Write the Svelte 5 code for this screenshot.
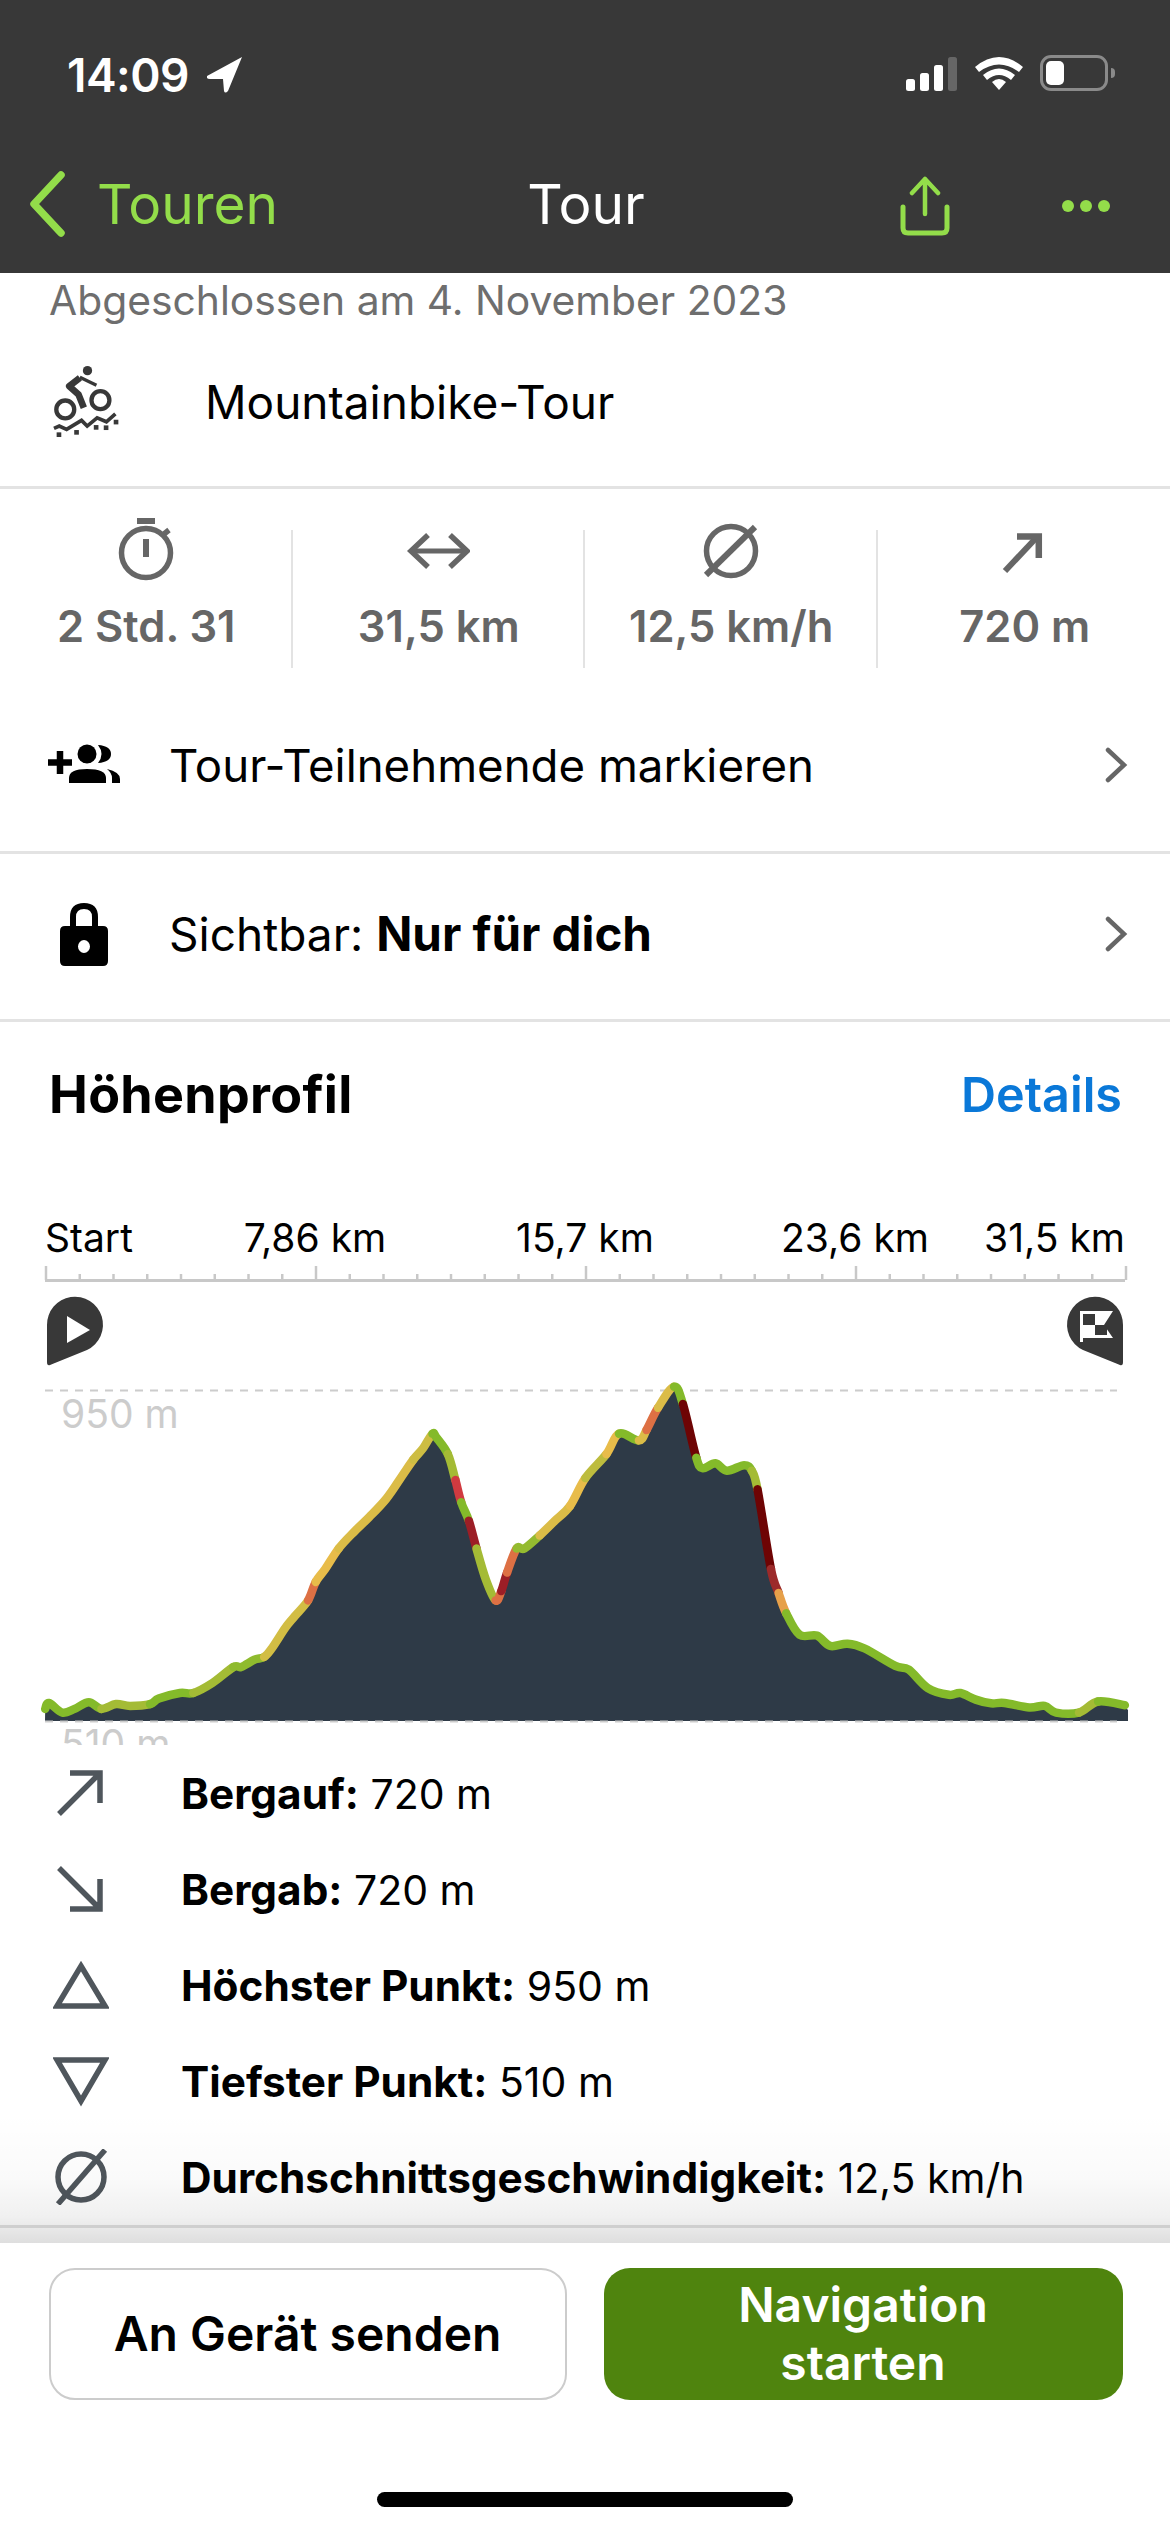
<script>
  // elevation line, one run per gradient colour; x/y are screen px inside the chart svg
  const Z3 = ([x, y]) => [x / 2.613, 1180 + y / 2.7];
  const Z4 = ([x, y]) => [570 + x / 2.613, 1180 + y / 2.7];

  const left = [
    [118,1428],[128,1412],[163,1438],[195,1428],[232,1410],[265,1428],[303,1415],[340,1420],[392,1415],[415,1400],
    [470,1385],[505,1385],[555,1358],[610,1315],[630,1315],[665,1295],[690,1288],[710,1265],[745,1210],[770,1178],
    [805,1135],[825,1085],[850,1050],[885,995],[925,950],[965,910],[1010,860],[1050,800],[1080,755],[1105,725],
    [1130,685],[1140,695],[1170,740],[1190,810],[1205,870],[1225,920],[1245,995],[1270,1080],[1295,1135],[1310,1110],
    [1325,1060],[1350,995],[1370,995],[1410,960],[1450,920]
  ].map(Z3);
  const right = [
    [0,880],[40,805],[95,740],[128,685],[180,703],[200,675],[230,615],[272,558],[295,605],[330,750],
    [347,778],[380,765],[410,785],[455,770],[475,785],[490,835],[525,1050],[545,1115],[565,1170],[600,1228],
    [645,1230],[680,1258],[725,1252],[770,1265],[850,1312],[885,1322],[935,1372],[990,1390],[1020,1385],[1060,1403],
    [1100,1413],[1135,1412],[1200,1424],[1240,1420],[1270,1438],[1330,1438],[1380,1408],[1450,1418]
  ].map(Z4);
  const pts = [...left, ...right];

  const GREEN = "#84ba2a", OLIVE = "#a4bb35", SAND = "#dbbc47", AMBER = "#e8bc4a";
  const ORANGE = "#dd7044", RED = "#d13a40", DARK = "#9c1e26", MAROON = "#6e0404";

  // [first index, last index, colour]
  const runs = [
    [0, 5, GREEN], [5, 8, OLIVE], [8, 11, GREEN], [11, 13, OLIVE], [13, 16, "#8fbb2e"], [16, 20, "#d2bd44"],
    [20, 21, ORANGE], [21, 23, AMBER], [23, 28, SAND], [28, 30, "#cdbd43"], [30, 32, GREEN], [32, 33, OLIVE],
    [33, 34, RED], [34, 35, GREEN], [35, 36, DARK], [36, 38, OLIVE], [38, 39, ORANGE], [39, 40, DARK],
    [40, 41, ORANGE], [41, 43, "#94bb30"], [43, 45, SAND], [45, 46, AMBER], [46, 47, "#bdbc3e"], [47, 48, AMBER],
    [48, 49, GREEN], [49, 50, SAND], [50, 51, ORANGE], [51, 52, SAND], [52, 53, GREEN], [53, 54, MAROON],
    [54, 59, GREEN], [59, 60, OLIVE], [60, 61, MAROON], [61, 62, "#9c2a2a"], [62, 63, "#e6a04a"],
    [63, 80, GREEN], [80, 81, OLIVE], [81, 82, GREEN]
  ];

  // catmull-rom through pts[a..b], using the neighbours outside the run too
  function smooth(a, b) {
    let d = `M${pts[a][0].toFixed(1)} ${pts[a][1].toFixed(1)}`;
    for (let i = a; i < b; i++) {
      const p0 = pts[Math.max(i - 1, 0)];
      const p1 = pts[i];
      const p2 = pts[i + 1];
      const p3 = pts[Math.min(i + 2, pts.length - 1)];
      const c1x = p1[0] + (p2[0] - p0[0]) / 6;
      const c1y = p1[1] + (p2[1] - p0[1]) / 6;
      const c2x = p2[0] - (p3[0] - p1[0]) / 6;
      const c2y = p2[1] - (p3[1] - p1[1]) / 6;
      d += ` C${c1x.toFixed(1)} ${c1y.toFixed(1)} ${c2x.toFixed(1)} ${c2y.toFixed(1)} ${p2[0].toFixed(1)} ${p2[1].toFixed(1)}`;
    }
    return d;
  }

  const segments = runs.map(([a, b, c]) => ({ d: smooth(a, b), c }));
  const BASE = 1721;
  const area = smooth(0, pts.length - 1) + ` L1128 ${pts[pts.length - 1][1] + 5} L1128 ${BASE} L45 ${BASE} Z`;

  const axisLabels = [
    { t: "7,86 km", x: 315 }, { t: "15,7 km", x: 585 }, { t: "23,6 km", x: 855 }
  ];
  const ticks = Array.from({ length: 33 }, (_, i) => 46 + i * 33.75);

  const summary = [
    { icon: "up", label: "Bergauf:", value: "720 m" },
    { icon: "down", label: "Bergab:", value: "720 m" },
    { icon: "high", label: "Höchster Punkt:", value: "950 m" },
    { icon: "low", label: "Tiefster Punkt:", value: "510 m" },
    { icon: "avg", label: "Durchschnittsgeschwindigkeit:", value: "12,5 km/h" }
  ];
</script>

<div class="phone">
  <header>
    <div class="status">
      <div class="time">
        <span>14:09</span>
        <svg width="36" height="36" viewBox="0 0 36 36"><path d="M35 0 L0 19 Q-1 22 3 22 L16 22 L17 34 Q18 37 21 34 Z" fill="#fff" /></svg>
      </div>
      <div class="indicators">
        <svg class="signal" width="52" height="36" viewBox="0 0 52 36">
          <rect x="0" y="22" width="9" height="12" rx="2.5" fill="#fff" />
          <rect x="14" y="16" width="9" height="18" rx="2.5" fill="#fff" />
          <rect x="28" y="8" width="9" height="26" rx="2.5" fill="#fff" />
          <rect x="42" y="0" width="9" height="34" rx="2.5" fill="#666" />
        </svg>
        <svg class="wifi" width="48" height="36" viewBox="0 0 48 36">
          <path d="M0 12 Q24 -8 48 12 L44 17 Q24 2 4 17 Z" fill="#fff" />
          <path d="M8 20 Q24 7 40 20 L36 25 Q24 15 12 25 Z" fill="#fff" />
          <path d="M17 27 Q24 21 31 27 L24 35 Z" fill="#fff" />
        </svg>
        <div class="battery"><div class="charge"></div></div>
        <div class="tip"></div>
      </div>
    </div>
    <nav>
      <div class="back">
        <svg width="40" height="66" viewBox="0 0 40 66"><path d="M33 4 L6 33 L33 62" fill="none" stroke="#93dd4a" stroke-width="7.5" stroke-linecap="round" stroke-linejoin="round" /></svg>
        <span>Touren</span>
      </div>
      <div class="title">Tour</div>
      <div class="actions">
        <svg width="50" height="60" viewBox="0 0 50 60" fill="none" stroke="#93dd4a" stroke-width="4.5" stroke-linecap="round" stroke-linejoin="round">
          <path d="M25 38 V3 M12 17 L25 3 L38 17" />
          <path d="M3 31 V52 Q3 57 8 57 H42 Q47 57 47 52 V31" stroke-width="5" />
        </svg>
        <svg width="48" height="14" viewBox="0 0 48 14"><circle cx="6" cy="7" r="6" fill="#93dd4a" /><circle cx="24" cy="7" r="6" fill="#93dd4a" /><circle cx="42" cy="7" r="6" fill="#93dd4a" /></svg>
      </div>
    </nav>
  </header>

  <main>
    <div class="finished">Abgeschlossen am 4. November 2023</div>
    <div class="type">
      <svg class="bike" width="73" height="78" viewBox="150 95 220 235">
        <circle cx="263" cy="118" r="14" fill="#383838" />
        <path d="M240 140 L208 165 L236 190 L252 230" fill="none" stroke="#383838" stroke-width="20" stroke-linejoin="round" />
        <path d="M240 138 L290 162" fill="none" stroke="#383838" stroke-width="10" />
        <circle cx="196" cy="235" r="27" fill="none" stroke="#383838" stroke-width="13" />
        <circle cx="302" cy="207" r="27" fill="none" stroke="#383838" stroke-width="13" />
        <path d="M162 292 L178 285 L200 295 L245 268 L262 285 L292 260 L320 272 L347 248" fill="none" stroke="#383838" stroke-width="11" />
        <rect x="170" y="304" width="14" height="14" fill="#383838" />
        <rect x="223" y="297" width="14" height="14" fill="#383838" />
        <rect x="282" y="282" width="14" height="14" fill="#383838" />
        <rect x="312" y="283" width="14" height="14" fill="#383838" />
        <rect x="342" y="266" width="14" height="14" fill="#383838" />
      </svg>
      <span>Mountainbike-Tour</span>
    </div>

    <div class="stats">
      <div class="stat">
        <svg width="64" height="64" viewBox="113 518 64 64" fill="none" stroke="#666" stroke-width="5.5">
          <circle cx="146" cy="553" r="24.5" />
          <rect x="137" y="518" width="18" height="6" fill="#666" stroke="none" />
          <rect x="143" y="539" width="6" height="18" fill="#666" stroke="none" />
          <path d="M164 534 L169 530" />
        </svg>
        <span>2 Std. 31</span>
      </div>
      <div class="stat">
        <svg width="64" height="64" viewBox="406 518 64 64" fill="none" stroke="#666" stroke-width="5.5">
          <path d="M414 551 H464" stroke-width="5" />
          <path d="M428 535 L411 551 L428 567 M450 535 L467 551 L450 567" />
        </svg>
        <span>31,5 km</span>
      </div>
      <div class="stat">
        <svg width="64" height="64" viewBox="698 518 64 64" fill="none" stroke="#666" stroke-width="5.5">
          <circle cx="731" cy="551" r="24.5" />
          <path d="M755 527 L706 575" stroke-width="6" />
        </svg>
        <span>12,5 km/h</span>
      </div>
      <div class="stat">
        <svg width="64" height="64" viewBox="992 518 64 64" fill="none" stroke="#666" stroke-width="6.5">
          <path d="M1037 537 L1005 571" stroke-width="6" />
          <path d="M1017 536.5 H1038.8 V558" />
        </svg>
        <span>720 m</span>
      </div>
    </div>

    <div class="row">
      <svg class="row-icon" width="74" height="42" viewBox="47 745 74 42">
        <path d="M48 763.5 H72 M60 752 V775" stroke="#000" stroke-width="6.5" />
        <circle cx="87" cy="755" r="9.5" fill="#000" />
        <path d="M69 784 V779 Q69 770 87 770 Q106 770 106 779 V784 Z" fill="#000" />
        <path d="M98 746 Q105 755 98 764 Q111 763 111 755 Q111 747 98 746 Z" fill="#000" />
        <path d="M107 770 Q120 773 120 780 V784 H112 V779 Q112 774 107 770 Z" fill="#000" />
      </svg>
      <span class="row-text">Tour-Teilnehmende markieren</span>
      <svg class="chevron" width="24" height="36" viewBox="0 0 24 36"><path d="M4 3 L20 18 L4 33" fill="none" stroke="#666" stroke-width="4.5" stroke-linecap="round" /></svg>
    </div>
    <div class="row second">
      <svg class="row-icon lock" width="48" height="64" viewBox="0 0 48 64">
        <path d="M13 28 V15 Q13 4 24 4 Q35 4 35 15 V28" fill="none" stroke="#000" stroke-width="6" />
        <path d="M5 24 H43 Q48 24 48 29 V59 Q48 64 43 64 H5 Q0 64 0 59 V29 Q0 24 5 24 Z M24 38 A6 6.5 0 1 0 24 51 A6 6.5 0 1 0 24 38 Z" fill="#000" fill-rule="evenodd" />
      </svg>
      <span class="row-text">Sichtbar: <b>Nur für dich</b></span>
      <svg class="chevron" width="24" height="36" viewBox="0 0 24 36"><path d="M4 3 L20 18 L4 33" fill="none" stroke="#666" stroke-width="4.5" stroke-linecap="round" /></svg>
    </div>

    <section>
      <div class="section-head">
        <h2>Höhenprofil</h2>
        <span class="details">Details</span>
      </div>
      <svg class="chart" width="1170" height="542" viewBox="0 1203 1170 542">
        <text x="45" y="1252" class="axis">Start</text>
        {#each axisLabels as l}
          <text x={l.x} y="1252" text-anchor="middle" class="axis">{l.t}</text>
        {/each}
        <text x="1125" y="1252" text-anchor="end" class="axis">31,5 km</text>
        <path d="M45 1280.5 H1125" stroke="#c8c8c8" stroke-width="3" />
        {#each ticks as x, i}
          <path d="M{x} 1280 V{i % 8 === 0 ? 1266 : 1274}" stroke="#c8c8c8" stroke-width="2.5" />
        {/each}

        <path d="M47 1325 A28 28 0 1 1 87 1350 L50 1365 Q47 1366 47 1362 Z" fill="#383838" />
        <path d="M67 1316 L90 1330 L67 1343 Z" fill="#fff" />
        <path d="M1123 1325 A28 28 0 1 0 1083 1350 L1120 1365 Q1123 1366 1123 1362 Z" fill="#383838" />
        <path d="M1080 1342 V1311 H1113 L1104 1325 L1113 1338 H1083 V1342 Z" fill="#fff" />
        <rect x="1083" y="1314" width="12" height="11" fill="#383838" />
        <rect x="1095" y="1325" width="12" height="10" fill="#383838" />

        <path d="M45 1390.5 H1117" stroke="#ccc" stroke-width="2" stroke-dasharray="8 7" />
        <text x="61" y="1428" class="limit">950 m</text>
        <text x="61" y="1758" class="limit">510 m</text>

        <path d={area} fill="#2e3a47" />
        {#each segments as s}
          <path d={s.d} fill="none" stroke={s.c} stroke-width="8.5" stroke-linecap="round" stroke-linejoin="round" />
        {/each}
        <path d="M45 1721.5 H1117" stroke="#ccc" stroke-width="2" stroke-dasharray="8 7" />
      </svg>

      <ul>
        {#each summary as item}
          <li>
            <svg width="56" height="56" viewBox="0 0 56 56" fill="none" stroke="#4f565c" stroke-width="5.5">
              {#if item.icon === "up"}
                <path d="M6 49 L45 10 M17 8 H47 V38" />
              {:else if item.icon === "down"}
                <path d="M6 7 L45 46 M47 18 V48 H17" />
              {:else if item.icon === "high"}
                <path d="M28 9 L52 49 H4 Z" />
              {:else if item.icon === "low"}
                <path d="M4 7 H52 L28 48 Z" />
              {:else}
                <circle cx="28" cy="28" r="23" />
                <path d="M52 1 L5 55" />
              {/if}
            </svg>
            <span><b>{item.label}</b> {item.value}</span>
          </li>
        {/each}
      </ul>
    </section>
    <div class="fade"></div>
  </main>

  <footer>
    <div class="buttons">
      <button class="outline">An Gerät senden</button>
      <button class="primary">Navigation starten</button>
    </div>
    <div class="home"></div>
  </footer>
</div>

<style>
  :global(body) {
    margin: 0;
    background: #fff;
  }

  .phone {
    width: 1170px;
    height: 2532px;
    display: flex;
    flex-direction: column;
    overflow: hidden;
    font-family: Inter, "Liberation Sans", sans-serif;
    color: #000;
  }

  header {
    height: 273px;
    flex: none;
    background: #383838;
    color: #fff;
  }

  .status {
    height: 150px;
    padding: 55px 55px 0 67px;
    box-sizing: border-box;
    display: flex;
    justify-content: space-between;
  }

  .time {
    display: flex;
    align-items: flex-start;
    gap: 18px;
    font-size: 46px;
    font-weight: 600;
    letter-spacing: -0.5px;
    line-height: 40px;
  }

  .time svg {
    margin-top: 2px;
  }

  .indicators {
    display: flex;
    align-items: flex-start;
    height: 38px;
  }

  .signal {
    margin: 2px 17px 0 0;
  }

  .wifi {
    margin-right: 17px;
  }

  .battery {
    width: 68px;
    height: 36px;
    box-sizing: border-box;
    border: 3px solid #8a8a8a;
    border-radius: 11px;
    padding: 3px;
  }

  .charge {
    width: 18px;
    height: 24px;
    background: #fff;
    border-radius: 5px;
  }

  .tip {
    width: 4px;
    height: 10px;
    margin: 13px 0 0 3px;
    background: #8a8a8a;
    border-radius: 0 4px 4px 0;
  }

  nav {
    height: 123px;
    position: relative;
    display: flex;
    align-items: flex-start;
    justify-content: space-between;
    padding: 21px 60px 0 28px;
  }

  .back {
    display: flex;
    align-items: center;
    gap: 29px;
    color: #93dd4a;
    font-size: 55px;
  }

  .title {
    position: absolute;
    left: 2px;
    right: 0;
    top: 22px;
    text-align: center;
    font-size: 55px;
    line-height: 64px;
  }

  .actions {
    display: flex;
    align-items: center;
    gap: 112px;
    margin-top: 5px;
  }

  main {
    flex: 1;
    min-height: 0;
    position: relative;
    overflow: hidden;
  }

  .finished {
    height: 54px;
    padding-left: 49px;
    font-size: 40.8px;
    line-height: 54px;
    color: #6e6e6e;
  }

  .type {
    height: 149px;
    padding: 0 0 10px 50px;
    display: flex;
    align-items: center;
    border-bottom: 3px solid #e3e3e3;
  }

  .type span {
    margin-left: 82px;
    font-size: 46px;
  }

  .stats {
    display: grid;
    grid-template-columns: repeat(4, 1fr);
    padding-top: 41px;
    height: 138px;
  }

  .stat {
    display: flex;
    flex-direction: column;
    align-items: center;
    height: 138px;
    border-right: 2px solid #e3e3e3;
    box-sizing: border-box;
  }

  .stat:last-child {
    border-right: none;
  }

  .stat svg {
    margin-top: -12px;
  }

  .stat span {
    margin-top: 20px;
    margin-left: 2px;
    font-size: 43.5px;
    font-weight: 600;
    line-height: 48px;
    color: #666;
  }

  .row {
    height: 172px;
    padding: 11px 42px 0 47px;
    display: flex;
    align-items: center;
    border-bottom: 3px solid #e3e3e3;
  }

  .row.second {
    height: 159px;
    padding-top: 0;
    padding-bottom: 6px;
  }

  .row-icon {
    margin-right: 48px;
    flex: none;
  }

  .lock {
    margin-left: 13px;
    margin-right: 61px;
  }

  .row-text {
    flex: 1;
    font-size: 45.6px;
  }

  .row.second .row-text {
    font-size: 46px;
  }

  .row-text b {
    font-size: 47.5px;
    font-weight: 700;
  }

  .section-head {
    display: flex;
    justify-content: space-between;
    align-items: center;
    height: 146px;
    padding: 0 48px 2px 49px;
    box-sizing: border-box;
  }

  h2 {
    margin: 0;
    font-size: 52px;
    font-weight: 700;
    letter-spacing: 0.3px;
  }

  .details {
    color: #0a78d8;
    font-size: 48.5px;
    font-weight: 600;
  }

  .chart {
    display: block;
    margin-top: 35px;
  }

  .axis {
    font-size: 39px;
    fill: #000;
  }

  .limit {
    font-size: 39px;
    fill: #ccc;
  }

  ul {
    list-style: none;
    margin: 0;
    padding: 0 0 0 53px;
  }

  li {
    height: 96px;
    display: flex;
    align-items: center;
    font-size: 41px;
  }

  li svg {
    margin-right: 72px;
    flex: none;
  }

  li b {
    font-size: 42.3px;
    font-weight: 700;
  }

  .fade {
    position: absolute;
    left: 0;
    right: 0;
    bottom: 0;
    height: 130px;
    background: linear-gradient(rgba(0, 0, 0, 0), rgba(0, 0, 0, 0.02) 50%, rgba(0, 0, 0, 0.06) 80%, rgba(0, 0, 0, 0.13));
  }

  .fade::after {
    content: "";
    position: absolute;
    left: 0;
    right: 0;
    bottom: 15px;
    height: 3px;
    background: #cfcfcf;
  }

  footer {
    height: 289px;
    flex: none;
    background: #fff;
    display: flex;
    flex-direction: column;
    align-items: center;
  }

  .buttons {
    display: grid;
    grid-template-columns: 518px 519px;
    gap: 37px;
    margin-top: 25px;
    margin-left: 1px;
  }

  button {
    height: 132px;
    border-radius: 26px;
    font-family: inherit;
    font-size: 48px;
    font-weight: 600;
    line-height: 58px;
    padding: 0 90px;
    box-sizing: border-box;
  }

  .outline {
    background: #fff;
    border: 2px solid #ccc;
    color: #000;
    padding: 0 20px;
  }

  .primary {
    background: #4f840e;
    border: none;
    color: #fff;
  }

  .home {
    width: 416px;
    height: 15px;
    margin-top: 92px;
    border-radius: 8px;
    background: #000;
  }
</style>
